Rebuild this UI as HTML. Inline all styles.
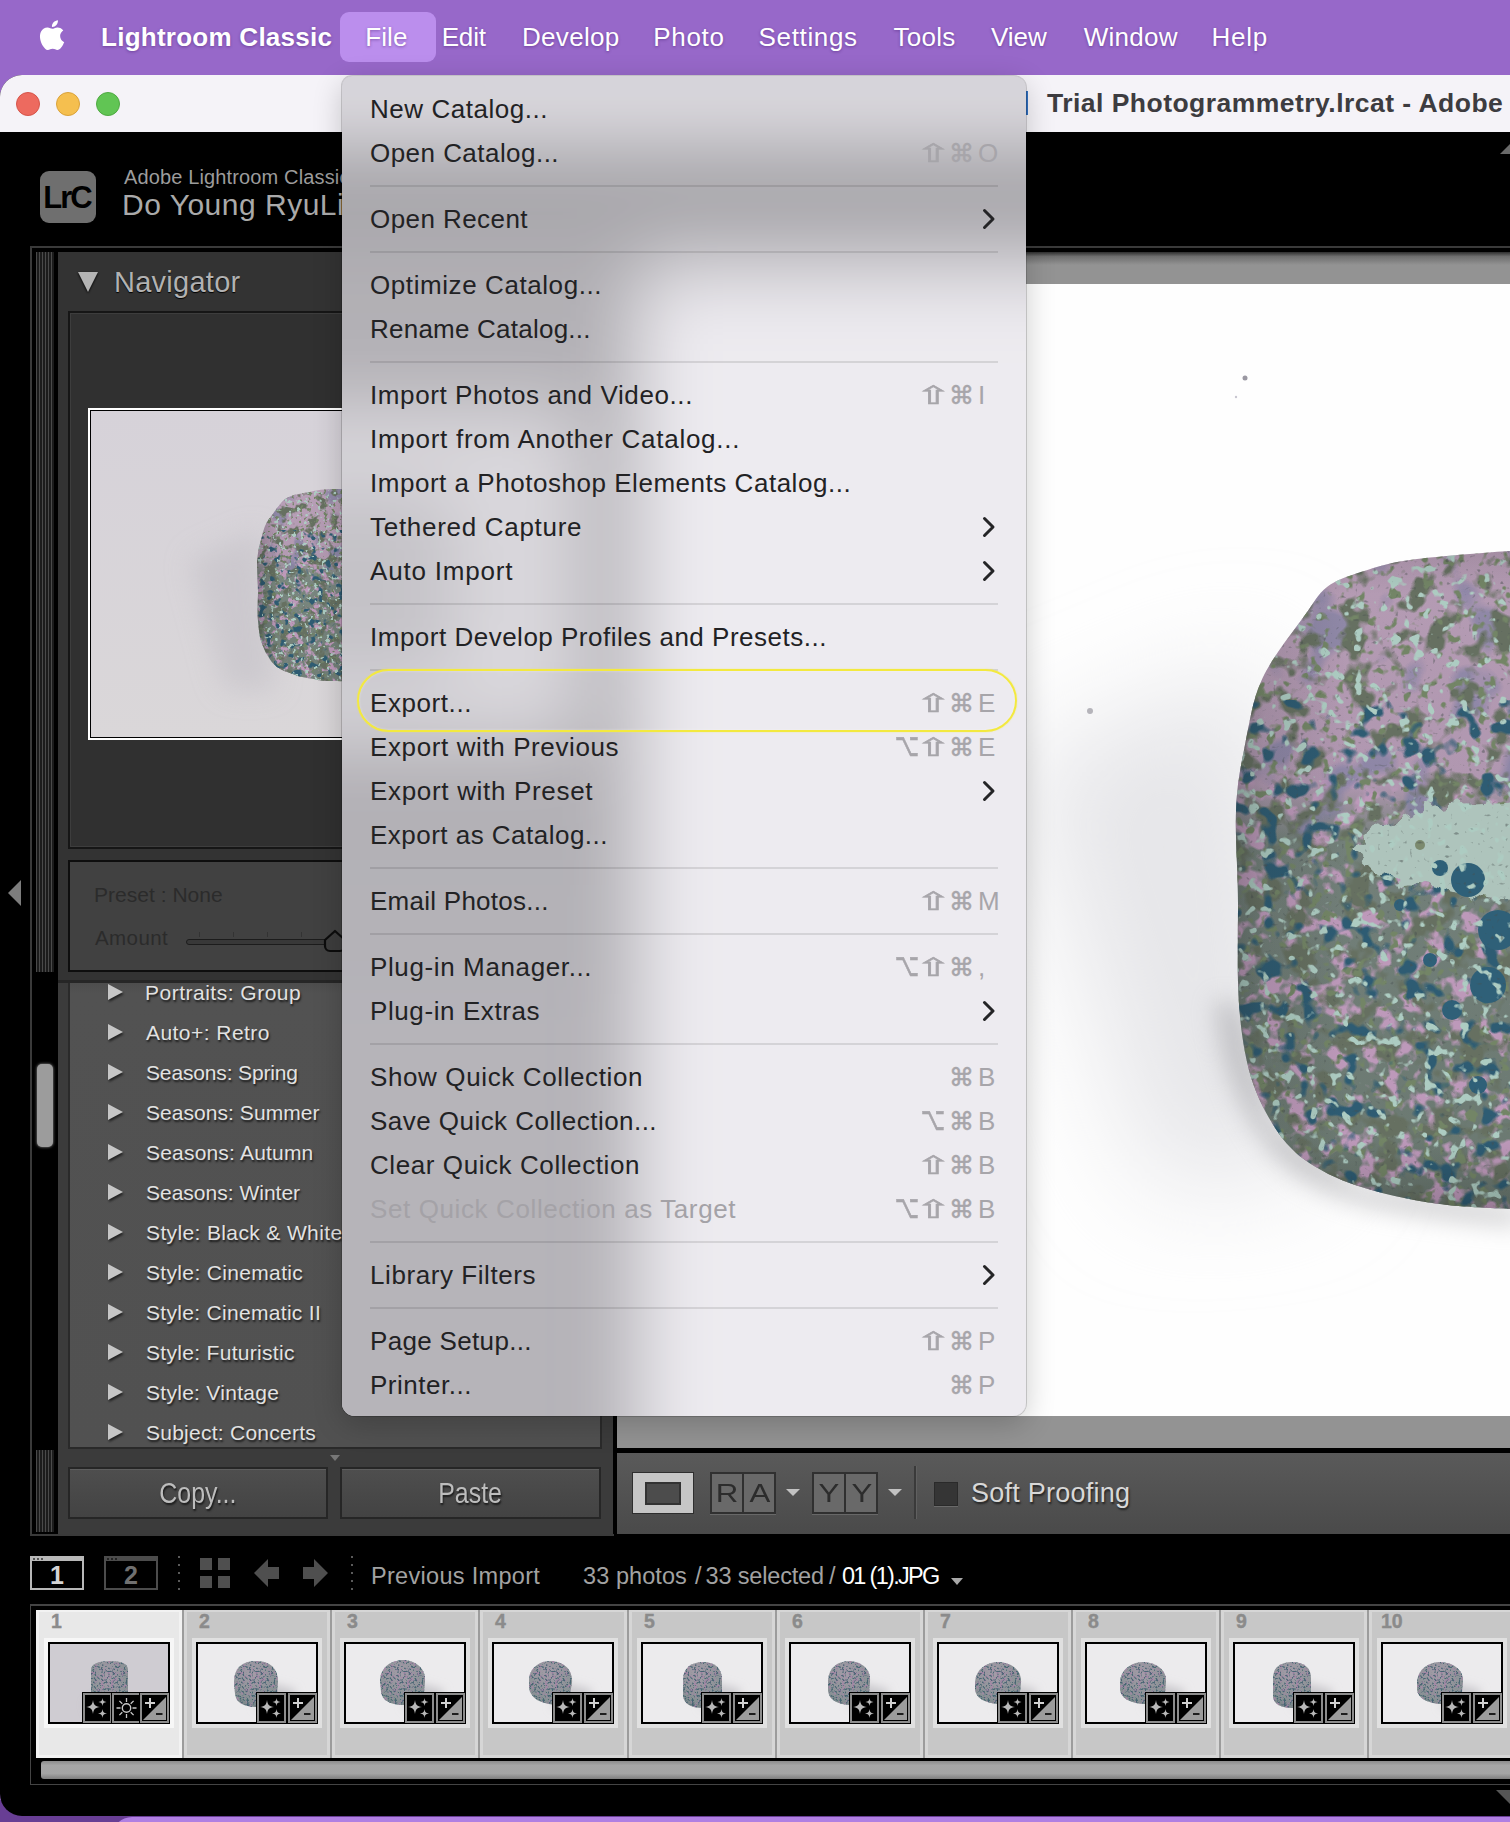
<!DOCTYPE html>
<html lang="en">
<head>
<meta charset="utf-8">
<title>Lightroom Classic – File menu</title>
<style>
*{box-sizing:border-box;margin:0;padding:0}
html,body{width:1510px;height:1822px;overflow:hidden}
body{position:relative;background:#9768c9;font-family:"Liberation Sans","DejaVu Sans",sans-serif;color:#fff}
.abs{position:absolute}
/* ---------- mac menu bar ---------- */
#menubar{position:absolute;left:0;top:0;width:1510px;height:76px;background:#9768c9}
#menubar span{position:absolute;top:20px;height:34px;line-height:34px;font-size:26px;color:#fff;white-space:nowrap;text-shadow:0 1px 3px rgba(60,20,100,.45)}
#menubar .app{font-weight:bold}
#filehl{position:absolute;left:340px;top:12px;width:96px;height:50px;border-radius:9px;background:#bb8eed}
/* ---------- window ---------- */
#win{position:absolute;left:0;top:75px;width:1530px;height:1741px;background:#000;border-radius:22px 0 0 22px;overflow:hidden}
#titlebar{position:absolute;left:0;top:0;width:100%;height:57px;background:#f5f3f8}
.tl{position:absolute;top:17px;width:24px;height:24px;border-radius:50%}
#wtitle{position:absolute;left:1047px;top:11px;font-size:26.5px;font-weight:bold;color:#3d3c40;white-space:nowrap;line-height:34px}
/* ---------- File menu ---------- */
#menu{position:absolute;left:342px;top:76px;width:684px;height:1340px;border-radius:10px 12px 13px 13px;overflow:hidden;
 background:
  linear-gradient(180deg,#d2d0d6 0,#cbc9cf 40px,rgba(178,176,181,1) 90px,rgba(170,168,173,1) 160px,rgba(172,170,175,.85) 190px,rgba(176,174,179,0) 300px),
  linear-gradient(90deg,#b3b1b6 0,#b6b4b9 200px,#c6c4c9 270px,#e2e0e5 340px,#eceaef 420px,#edebf0 100%);
 box-shadow:0 0 0 1px rgba(0,0,0,.16),0 8px 30px rgba(0,0,0,.2)}
.mi{position:absolute;left:0;width:684px;height:44px;line-height:44px;font-size:26px;color:#222224;white-space:nowrap}
.mi.dis{color:#a4a2a7}
.mt{position:absolute;left:28px;top:0}
.msep{position:absolute;left:28px;width:628px;height:2px;background:rgba(0,0,0,.1)}
.chev{position:absolute;left:640px;top:11px}
.sg{position:absolute;top:1px;font-family:"DejaVu Sans","Liberation Sans",sans-serif;font-size:25px;color:#a7a5aa;-webkit-text-stroke:.5px #a7a5aa}
.sS{transform:scaleX(1.75);transform-origin:0 50%}
.sO{transform:scale(.84,1.28);transform-origin:0 68%}
.sk{position:absolute;top:0;font-size:26px;color:#a7a5aa}
#ring{position:absolute;left:15px;top:593px;width:660px;height:63px;border:2.5px solid #f3e93f;border-radius:32px;box-shadow:inset 0 0 3px rgba(255,255,255,.35),0 0 1.5px rgba(243,233,63,.7)}
/* ---------- Lightroom chrome ---------- */
.lr{font-family:"Liberation Sans","DejaVu Sans",sans-serif}
</style>
</head>
<body>
<!-- desktop strip at very bottom -->
<div class="abs" style="left:0;top:1800px;width:1510px;height:22px;background:#683e94"></div>
<div class="abs" style="left:112px;top:1817px;width:1500px;height:40px;border-radius:22px;background:#b07fe2"></div>

<!-- macOS menu bar -->
<div id="menubar">
  <div id="filehl"></div>
  <svg class="abs" style="left:35.5px;top:18px" width="30" height="34" viewBox="0 0 28 32"><path fill="#fff" d="M22.6 17c0-3.500 2.900-5.200 3-5.300-1.700-2.400-4.200-2.700-5.100-2.800-2.200-.2-4.200 1.300-5.300 1.300-1.100 0-2.800-1.300-4.600-1.200-2.400 0-4.500 1.400-5.800 3.500-2.500 4.300-.6 10.600 1.800 14.100 1.200 1.700 2.600 3.600 4.400 3.500 1.800-.1 2.400-1.100 4.600-1.100 2.100 0 2.700 1.100 4.600 1.100 1.900 0 3.100-1.700 4.300-3.400 1.300-2 1.900-3.900 1.900-4-.1 0-3.700-1.400-3.800-5.700zM19.100 6.500c1-1.200 1.600-2.800 1.400-4.500-1.400.1-3.100.9-4.100 2.100-.9 1-1.700 2.700-1.500 4.300 1.600.1 3.200-.8 4.200-1.900z"/></svg>
  <span class="app" style="letter-spacing:0.26px;left:101.0px">Lightroom Classic</span>
  <span style="letter-spacing:0.12px;left:365.2px">File</span>
  <span style="letter-spacing:-0.16px;left:441.7px">Edit</span>
  <span style="letter-spacing:0.34px;left:521.9px">Develop</span>
  <span style="letter-spacing:0.65px;left:653.3px">Photo</span>
  <span style="letter-spacing:0.64px;left:758.6px">Settings</span>
  <span style="letter-spacing:0.25px;left:893.6px">Tools</span>
  <span style="letter-spacing:-0.04px;left:991.0px">View</span>
  <span style="letter-spacing:0.28px;left:1083.7px">Window</span>
  <span style="letter-spacing:0.76px;left:1211.5px">Help</span>
</div>

<!-- application window -->
<div id="win">
  <div id="titlebar">
    <div class="tl" style="left:16px;background:#ed6a5f;border:1px solid #d5544a"></div>
    <div class="tl" style="left:56px;background:#f5bf4f;border:1px solid #d9a23b"></div>
    <div class="tl" style="left:96px;background:#61c554;border:1px solid #4fa942"></div>
    <div class="abs" style="left:1024px;top:16px;width:4px;height:24px;background:#2f6fc0"></div>
    <div id="wtitle" style="letter-spacing:0.47px;left:1047.0px">Trial Photogrammetry.lrcat - Adobe</div>
  </div>
  <div id="pg" class="abs" style="left:0;top:-75px;width:1530px;height:1822px">
<div class="abs" style="left:40px;top:171px;width:56px;height:52px;border-radius:9px;background:#6f6f6f;color:#000;font-weight:bold;font-size:31px;line-height:53px;text-align:center;letter-spacing:-2px;text-indent:-2px">LrC</div>
<div class="abs" style="left:124px;top:164.7px;font-size:20px;line-height:24.0px;color:#9c9c9c;white-space:nowrap;letter-spacing:0.14px;">Adobe Lightroom Classic</div>
<div class="abs" style="left:122px;top:187.1px;font-size:30px;line-height:36.0px;color:#aaaaaa;white-space:nowrap;letter-spacing:0.5px;">Do Young RyuLi</div>
<div class="abs" style="left:1500px;top:143px;width:0;height:0;border-left:11px solid transparent;border-bottom:11px solid #6a6a6a"></div>
<div class="abs" style="left:30px;top:246px;width:1500px;height:2px;background:#3a3a3a"></div>
<div class="abs" style="left:30px;top:246px;width:2px;height:1290px;background:#3a3a3a"></div>
<div class="abs" style="left:30px;top:1534px;width:584px;height:2px;background:#3a3a3a"></div>
<div class="abs" style="left:36px;top:252px;width:18px;height:720px;background:repeating-linear-gradient(90deg,#4a4a4a 0 1px,#1c1c1c 1px 3px)"></div>
<div class="abs" style="left:36px;top:1450px;width:18px;height:82px;background:repeating-linear-gradient(90deg,#4a4a4a 0 1px,#1c1c1c 1px 3px)"></div>
<div class="abs" style="left:37px;top:1064px;width:16px;height:83px;border-radius:5px;background:#9c9c9c;box-shadow:0 0 3px #9c9c9c"></div>
<div class="abs" style="left:8px;top:880px;width:0;height:0;border-top:13px solid transparent;border-bottom:13px solid transparent;border-right:13px solid #7d7d7d"></div>
<div class="abs" style="left:58px;top:252px;width:555px;height:730px;background:#333333"></div>
<div class="abs" style="left:78px;top:272px;width:0;height:0;border-left:10px solid transparent;border-right:10px solid transparent;border-top:20px solid #b4b4b4;filter:drop-shadow(0 1px 1px #000)"></div>
<div class="abs" style="left:114px;top:264.9px;font-size:29px;line-height:34.8px;color:#b2b2b2;white-space:nowrap;letter-spacing:0.26px;text-shadow:0 1px 1px #000">Navigator</div>
<div class="abs" style="left:68px;top:311px;width:534px;height:538px;background:#303030;border:2px solid #161616;box-shadow:inset 0 0 0 1px #3d3d3d"></div>
<div class="abs" style="left:88px;top:408px;width:300px;height:332px;background:#000;border:2px solid #fff;overflow:hidden">
<svg class="abs" style="left:1px;top:1px" width="300" height="326" viewBox="91 411 300 326">
<defs>
<filter id="na" x="0" y="0" width="100%" height="100%" color-interpolation-filters="sRGB"><feTurbulence type="fractalNoise" baseFrequency="0.0972" numOctaves="3" seed="7"/><feColorMatrix type="matrix" values="0 0 0 0 0.4 0 0 0 0 0.44 0 0 0 0 0.38 8 0 0 0 -4.24"/></filter>
<filter id="nf" x="0" y="0" width="100%" height="100%" color-interpolation-filters="sRGB"><feTurbulence type="fractalNoise" baseFrequency="0.2500" numOctaves="2" seed="17"/><feColorMatrix type="matrix" values="0 0 0 0 0.45 0 0 0 0 0.52 0 0 0 0 0.4 0 0 9 0 -5.35"/></filter>
<filter id="nb" x="0" y="0" width="100%" height="100%" color-interpolation-filters="sRGB"><feTurbulence type="fractalNoise" baseFrequency="0.1389" numOctaves="2" seed="11"/><feColorMatrix type="matrix" values="0 0 0 0 0.18 0 0 0 0 0.36 0 0 0 0 0.45 0 9 0 0 -5.3"/></filter>
<filter id="nc" x="0" y="0" width="100%" height="100%" color-interpolation-filters="sRGB"><feTurbulence type="fractalNoise" baseFrequency="0.2361" numOctaves="2" seed="23"/><feColorMatrix type="matrix" values="0 0 0 0 0.68 0 0 0 0 0.8 0 0 0 0 0.76 0 0 12 0 -7.5"/></filter>
<filter id="nd" x="0" y="0" width="100%" height="100%" color-interpolation-filters="sRGB"><feTurbulence type="fractalNoise" baseFrequency="0.1250" numOctaves="3" seed="31"/><feColorMatrix type="matrix" values="0 0 0 0 0.74 0 0 0 0 0.6 0 0 0 0 0.73 0 8 0 0 -4.1"/></filter>
<filter id="ne" x="0" y="0" width="100%" height="100%" color-interpolation-filters="sRGB"><feTurbulence type="fractalNoise" baseFrequency="0.6111" numOctaves="1" seed="5"/><feColorMatrix type="matrix" values="0 0 0 0 0.28 0 0 0 0 0.31 0 0 0 0 0.31 9 0 0 0 -6.0"/></filter>
<filter id="ng" x="0" y="0" width="100%" height="100%" color-interpolation-filters="sRGB"><feTurbulence type="fractalNoise" baseFrequency="0.0556" numOctaves="2" seed="41"/><feColorMatrix type="matrix" values="0 0 0 0 0.5 0 0 0 0 0.5 0 0 0 0 0.64 0 7 0 0 -3.95"/></filter>
<clipPath id="nclip"><path d="M393 492C383 491 351 489 337 489C323 489 317 490 310 492C303 493 298 494 294 495C289 497 286 498 284 500C281 502 280 505 277 508C275 511 272 515 269 519C267 522 265 525 264 529C262 534 261 541 259 547C258 553 257 558 257 565C257 573 258 583 258 592C258 602 257 613 258 621C259 629 259 635 261 641C263 646 265 652 268 656C270 660 273 664 277 667C281 670 287 672 293 674C299 677 307 678 314 679C322 681 324 681 337 681C350 682 383 683 393 683Z"/></clipPath>
<linearGradient id="nbase" x1="0" y1="0" x2="0" y2="1"><stop offset="0" stop-color="#b9a0b8"/><stop offset=".36" stop-color="#b39ab2"/><stop offset=".44" stop-color="#7a8780"/><stop offset="1" stop-color="#707e77"/></linearGradient>
<filter id="nblur" x="-40%" y="-40%" width="180%" height="180%"><feGaussianBlur stdDeviation="14"/></filter>
<linearGradient id="nbg" x1="0" y1="0" x2="0" y2="1"><stop offset="0" stop-color="#d6d2d9"/><stop offset="1" stop-color="#dad7d9"/></linearGradient>
<linearGradient id="nshade" x1="0" y1="0" x2="1" y2="0"><stop offset="0" stop-color="#1c2020" stop-opacity=".3"/><stop offset=".2" stop-color="#000" stop-opacity="0"/></linearGradient>
</defs>
<rect x="90" y="410" width="300" height="330" fill="url(#nbg)"/>
<path d="M190 560L260 530L275 690L225 690Z" fill="#c6c3c9" filter="url(#nblur)" opacity=".7"/>
<g clip-path="url(#nclip)">
<rect x="250" y="480" width="145" height="215" fill="url(#nbase)"/>
<rect x="250" y="560" width="145" height="135" filter="url(#nd)"/>
<rect x="250" y="480" width="145" height="90" filter="url(#ng)" opacity=".7"/>
<rect x="250" y="480" width="145" height="215" filter="url(#na)"/>
<rect x="250" y="480" width="145" height="215" filter="url(#nf)"/>
<rect x="250" y="530" width="145" height="165" filter="url(#nb)"/>
<rect x="250" y="480" width="145" height="215" filter="url(#nc)"/>
<rect x="250" y="480" width="145" height="215" fill="url(#nshade)"/>
</g>
</svg></div>
<div class="abs" style="left:68px;top:860px;width:534px;height:112px;background:#414141;border:2px solid #0e0e0e"></div>
<div class="abs" style="left:94px;top:882.1px;font-size:21px;line-height:25.2px;color:#2b2b2b;white-space:nowrap;letter-spacing:0.02px;">Preset : None</div>
<div class="abs" style="left:95px;top:926.0px;font-size:20.5px;line-height:24.6px;color:#2b2b2b;white-space:nowrap;letter-spacing:0.41px;">Amount</div>
<div class="abs" style="left:186px;top:939px;width:160px;height:6px;border-radius:3px;background:#383838;border:1px solid #1c1c1c"></div>
<div class="abs" style="left:199px;top:932px;width:1px;height:5px;background:#333"></div>
<div class="abs" style="left:233px;top:932px;width:1px;height:5px;background:#333"></div>
<div class="abs" style="left:267px;top:932px;width:1px;height:5px;background:#333"></div>
<div class="abs" style="left:301px;top:932px;width:1px;height:5px;background:#333"></div>
<svg class="abs" style="left:323px;top:929px" width="26" height="26" viewBox="0 0 26 26"><path d="M12 2 22 11V17a5 5 0 0 1-5 5H7a5 5 0 0 1-5-5V11Z" fill="#3d3d3d" stroke="#0c0c0c" stroke-width="2.200" stroke-linejoin="round"/></svg>
<div class="abs" style="left:58px;top:980px;width:555px;height:3px;background:#262626"></div>
<div class="abs" style="left:58px;top:983px;width:555px;height:551px;background:#3b3b3b"></div>
<div class="abs" style="left:68px;top:983px;width:534px;height:466px;background:linear-gradient(#4d4d4d,#525252 10px,#515151);border:2px solid #2a2a2a;border-top:none"></div>
<div class="abs" style="left:70px;top:983px;width:530px;height:464px;overflow:hidden">
<div class="abs" style="left:38px;top:1px;width:0;height:0;border-top:8px solid transparent;border-bottom:8px solid transparent;border-left:15px solid #c6c6c6;filter:drop-shadow(1px 2px 1px #222)"></div>
<div class="abs" style="left:75px;top:-2.9px;font-size:21px;line-height:25.2px;color:#e2e2e2;white-space:nowrap;letter-spacing:0.5px;text-shadow:1px 2px 2px #1a1a1a">Portraits: Group</div>
<div class="abs" style="left:38px;top:41px;width:0;height:0;border-top:8px solid transparent;border-bottom:8px solid transparent;border-left:15px solid #c6c6c6;filter:drop-shadow(1px 2px 1px #222)"></div>
<div class="abs" style="left:76px;top:37.1px;font-size:21px;line-height:25.2px;color:#e2e2e2;white-space:nowrap;letter-spacing:0.45px;text-shadow:1px 2px 2px #1a1a1a">Auto+: Retro</div>
<div class="abs" style="left:38px;top:81px;width:0;height:0;border-top:8px solid transparent;border-bottom:8px solid transparent;border-left:15px solid #c6c6c6;filter:drop-shadow(1px 2px 1px #222)"></div>
<div class="abs" style="left:76px;top:77.1px;font-size:21px;line-height:25.2px;color:#e2e2e2;white-space:nowrap;letter-spacing:-0.15px;text-shadow:1px 2px 2px #1a1a1a">Seasons: Spring</div>
<div class="abs" style="left:38px;top:121px;width:0;height:0;border-top:8px solid transparent;border-bottom:8px solid transparent;border-left:15px solid #c6c6c6;filter:drop-shadow(1px 2px 1px #222)"></div>
<div class="abs" style="left:76px;top:117.1px;font-size:21px;line-height:25.2px;color:#e2e2e2;white-space:nowrap;letter-spacing:0.05px;text-shadow:1px 2px 2px #1a1a1a">Seasons: Summer</div>
<div class="abs" style="left:38px;top:161px;width:0;height:0;border-top:8px solid transparent;border-bottom:8px solid transparent;border-left:15px solid #c6c6c6;filter:drop-shadow(1px 2px 1px #222)"></div>
<div class="abs" style="left:76px;top:157.1px;font-size:21px;line-height:25.2px;color:#e2e2e2;white-space:nowrap;letter-spacing:0.19px;text-shadow:1px 2px 2px #1a1a1a">Seasons: Autumn</div>
<div class="abs" style="left:38px;top:201px;width:0;height:0;border-top:8px solid transparent;border-bottom:8px solid transparent;border-left:15px solid #c6c6c6;filter:drop-shadow(1px 2px 1px #222)"></div>
<div class="abs" style="left:76px;top:197.1px;font-size:21px;line-height:25.2px;color:#e2e2e2;white-space:nowrap;letter-spacing:0.0px;text-shadow:1px 2px 2px #1a1a1a">Seasons: Winter</div>
<div class="abs" style="left:38px;top:241px;width:0;height:0;border-top:8px solid transparent;border-bottom:8px solid transparent;border-left:15px solid #c6c6c6;filter:drop-shadow(1px 2px 1px #222)"></div>
<div class="abs" style="left:76px;top:237.1px;font-size:21px;line-height:25.2px;color:#e2e2e2;white-space:nowrap;letter-spacing:0.37px;text-shadow:1px 2px 2px #1a1a1a">Style: Black &amp; White</div>
<div class="abs" style="left:38px;top:281px;width:0;height:0;border-top:8px solid transparent;border-bottom:8px solid transparent;border-left:15px solid #c6c6c6;filter:drop-shadow(1px 2px 1px #222)"></div>
<div class="abs" style="left:76px;top:277.1px;font-size:21px;line-height:25.2px;color:#e2e2e2;white-space:nowrap;letter-spacing:0.34px;text-shadow:1px 2px 2px #1a1a1a">Style: Cinematic</div>
<div class="abs" style="left:38px;top:321px;width:0;height:0;border-top:8px solid transparent;border-bottom:8px solid transparent;border-left:15px solid #c6c6c6;filter:drop-shadow(1px 2px 1px #222)"></div>
<div class="abs" style="left:76px;top:317.1px;font-size:21px;line-height:25.2px;color:#e2e2e2;white-space:nowrap;letter-spacing:0.31px;text-shadow:1px 2px 2px #1a1a1a">Style: Cinematic II</div>
<div class="abs" style="left:38px;top:361px;width:0;height:0;border-top:8px solid transparent;border-bottom:8px solid transparent;border-left:15px solid #c6c6c6;filter:drop-shadow(1px 2px 1px #222)"></div>
<div class="abs" style="left:76px;top:357.1px;font-size:21px;line-height:25.2px;color:#e2e2e2;white-space:nowrap;letter-spacing:0.31px;text-shadow:1px 2px 2px #1a1a1a">Style: Futuristic</div>
<div class="abs" style="left:38px;top:401px;width:0;height:0;border-top:8px solid transparent;border-bottom:8px solid transparent;border-left:15px solid #c6c6c6;filter:drop-shadow(1px 2px 1px #222)"></div>
<div class="abs" style="left:76px;top:397.1px;font-size:21px;line-height:25.2px;color:#e2e2e2;white-space:nowrap;letter-spacing:0.28px;text-shadow:1px 2px 2px #1a1a1a">Style: Vintage</div>
<div class="abs" style="left:38px;top:441px;width:0;height:0;border-top:8px solid transparent;border-bottom:8px solid transparent;border-left:15px solid #c6c6c6;filter:drop-shadow(1px 2px 1px #222)"></div>
<div class="abs" style="left:76px;top:437.1px;font-size:21px;line-height:25.2px;color:#e2e2e2;white-space:nowrap;letter-spacing:0.25px;text-shadow:1px 2px 2px #1a1a1a">Subject: Concerts</div>
</div>
<div class="abs" style="left:330px;top:1455px;width:0;height:0;border-left:5px solid transparent;border-right:5px solid transparent;border-top:6px solid #777"></div>
<div class="abs btn" style="left:68px;top:1467px;width:260px;height:52px;background:linear-gradient(#4e4e4e,#434343);border:2px solid #262626;box-shadow:inset 0 1px 0 #5e5e5e;font-size:29px;line-height:48px;text-align:center;color:#bdbdbd;text-shadow:1px 2px 2px #1a1a1a"><span style="display:inline-block;transform:scaleX(.86)">Copy...</span></div>
<div class="abs btn" style="left:340px;top:1467px;width:261px;height:52px;background:linear-gradient(#4e4e4e,#434343);border:2px solid #262626;box-shadow:inset 0 1px 0 #5e5e5e;font-size:29px;line-height:48px;text-align:center;color:#bdbdbd;text-shadow:1px 2px 2px #1a1a1a"><span style="display:inline-block;transform:scaleX(.86)">Paste</span></div>
<div class="abs" style="left:617px;top:252px;width:920px;height:1196px;background:#939393"></div>
<div class="abs" style="left:617px;top:252px;width:920px;height:13px;background:linear-gradient(#2e2e2e,#6f6f6f 35%,#939393)"></div>
<svg class="abs" style="left:617px;top:284px" width="893" height="1132" viewBox="617 284 893 1132">
<defs>
<filter id="ma" x="0" y="0" width="100%" height="100%" color-interpolation-filters="sRGB"><feTurbulence type="fractalNoise" baseFrequency="0.0350" numOctaves="3" seed="7"/><feColorMatrix type="matrix" values="0 0 0 0 0.4 0 0 0 0 0.44 0 0 0 0 0.38 8 0 0 0 -4.24"/></filter>
<filter id="mf" x="0" y="0" width="100%" height="100%" color-interpolation-filters="sRGB"><feTurbulence type="fractalNoise" baseFrequency="0.0900" numOctaves="2" seed="17"/><feColorMatrix type="matrix" values="0 0 0 0 0.45 0 0 0 0 0.52 0 0 0 0 0.4 0 0 9 0 -5.35"/></filter>
<filter id="mb" x="0" y="0" width="100%" height="100%" color-interpolation-filters="sRGB"><feTurbulence type="fractalNoise" baseFrequency="0.0500" numOctaves="2" seed="11"/><feColorMatrix type="matrix" values="0 0 0 0 0.18 0 0 0 0 0.36 0 0 0 0 0.45 0 9 0 0 -5.3"/></filter>
<filter id="mc" x="0" y="0" width="100%" height="100%" color-interpolation-filters="sRGB"><feTurbulence type="fractalNoise" baseFrequency="0.0850" numOctaves="2" seed="23"/><feColorMatrix type="matrix" values="0 0 0 0 0.68 0 0 0 0 0.8 0 0 0 0 0.76 0 0 12 0 -7.5"/></filter>
<filter id="md" x="0" y="0" width="100%" height="100%" color-interpolation-filters="sRGB"><feTurbulence type="fractalNoise" baseFrequency="0.0450" numOctaves="3" seed="31"/><feColorMatrix type="matrix" values="0 0 0 0 0.74 0 0 0 0 0.6 0 0 0 0 0.73 0 8 0 0 -4.1"/></filter>
<filter id="me" x="0" y="0" width="100%" height="100%" color-interpolation-filters="sRGB"><feTurbulence type="fractalNoise" baseFrequency="0.2200" numOctaves="1" seed="5"/><feColorMatrix type="matrix" values="0 0 0 0 0.28 0 0 0 0 0.31 0 0 0 0 0.31 9 0 0 0 -6.0"/></filter>
<filter id="mg" x="0" y="0" width="100%" height="100%" color-interpolation-filters="sRGB"><feTurbulence type="fractalNoise" baseFrequency="0.0200" numOctaves="2" seed="41"/><feColorMatrix type="matrix" values="0 0 0 0 0.5 0 0 0 0 0.5 0 0 0 0 0.64 0 7 0 0 -3.95"/></filter>
<clipPath id="mclip"><path d="M1520 550C1518 550 1527 550 1510 551C1493 552 1442 556 1417 559C1392 562 1376 567 1361 572C1346 577 1336 580 1327 587C1318 594 1313 604 1305 615C1297 626 1286 640 1278 652C1270 664 1264 673 1258 689C1252 705 1248 730 1244 750C1240 770 1237 785 1236 811C1235 837 1238 872 1238 904C1238 936 1237 976 1239 1004C1241 1032 1244 1050 1249 1070C1254 1090 1263 1108 1272 1123C1281 1138 1291 1150 1305 1160C1319 1170 1337 1179 1358 1186C1379 1193 1407 1199 1432 1203C1457 1207 1495 1208 1510 1209C1525 1210 1518 1210 1520 1210Z"/></clipPath>
<linearGradient id="mbase" x1="0" y1="0" x2="0" y2="1"><stop offset="0" stop-color="#b59cb4"/><stop offset=".36" stop-color="#b097b0"/><stop offset=".44" stop-color="#73807a"/><stop offset="1" stop-color="#6a7870"/></linearGradient>
<linearGradient id="mshade" x1="0" y1="0" x2="1" y2="0"><stop offset="0" stop-color="#1c2020" stop-opacity=".30"/><stop offset=".12" stop-color="#1c2020" stop-opacity=".12"/><stop offset=".4" stop-color="#000" stop-opacity="0"/></linearGradient>
<linearGradient id="mshade2" x1="0" y1="0" x2="0" y2="1"><stop offset="0" stop-color="#000" stop-opacity=".12"/><stop offset=".08" stop-color="#000" stop-opacity="0"/><stop offset=".88" stop-color="#000" stop-opacity="0"/><stop offset="1" stop-color="#000" stop-opacity=".22"/></linearGradient>
<filter id="mrag" x="-10%" y="-20%" width="120%" height="140%"><feTurbulence type="fractalNoise" baseFrequency="0.06" numOctaves="2" seed="2"/><feDisplacementMap in="SourceGraphic" scale="28" xChannelSelector="R" yChannelSelector="G"/></filter>
<filter id="mblur" filterUnits="userSpaceOnUse" x="617" y="284" width="893" height="1132"><feGaussianBlur stdDeviation="55"/></filter>
<filter id="mblur2" filterUnits="userSpaceOnUse" x="1100" y="800" width="420" height="520"><feGaussianBlur stdDeviation="12"/></filter>
</defs>
<rect x="617" y="284" width="893" height="1132" fill="#fefefe"/>
<path d="M1020 760L1260 660L1320 1170L1150 1190Z" fill="#e6e6e9" filter="url(#mblur)"/>
<path d="M1520 1225C1505 1224 1460 1220 1432 1216C1404 1212 1374 1208 1350 1200C1326 1192 1307 1183 1290 1170C1273 1157 1261 1138 1250 1120C1239 1102 1231 1080 1225 1060C1219 1040 1217 1010 1215 1000L1239 1004L1272 1123L1358 1186L1520 1209Z" fill="#9a9a9e" filter="url(#mblur2)" opacity=".5"/>
<g clip-path="url(#mclip)">
<rect x="1230" y="540" width="290" height="680" fill="url(#mbase)"/>
<rect x="1230" y="780" width="290" height="440" filter="url(#md)"/>
<rect x="1230" y="540" width="290" height="300" filter="url(#mg)" opacity=".7"/>
<rect x="1230" y="540" width="290" height="680" filter="url(#ma)"/>
<rect x="1230" y="540" width="290" height="680" filter="url(#mf)"/>
<rect x="1230" y="700" width="290" height="520" filter="url(#mb)"/>
<path d="M1352 846C1372 822 1400 826 1418 812C1450 800 1480 806 1520 800L1520 900C1480 905 1440 880 1400 884C1380 876 1362 866 1352 846Z" fill="#aec4bc" filter="url(#mrag)"/>
<circle cx="1468" cy="880" r="17" fill="#2f6078"/><circle cx="1498" cy="930" r="20" fill="#2f6078"/><circle cx="1440" cy="868" r="8" fill="#2f6078"/><circle cx="1420" cy="845" r="5" fill="#7c8a6e"/><circle cx="1488" cy="985" r="18" fill="#2f6078"/><circle cx="1452" cy="1010" r="10" fill="#2f6078"/><circle cx="1478" cy="1085" r="9" fill="#2f6078"/><circle cx="1430" cy="960" r="7" fill="#2f6078"/><circle cx="1400" cy="905" r="6" fill="#2f6078"/>
<rect x="1230" y="540" width="290" height="680" filter="url(#mc)"/>
<rect x="1230" y="540" width="290" height="680" filter="url(#me)" opacity=".45"/>
<rect x="1230" y="540" width="290" height="680" fill="url(#mshade)"/>
<rect x="1230" y="540" width="290" height="680" fill="url(#mshade2)"/>
</g>
<circle cx="1245" cy="378" r="2.500" fill="#9a98a2"/><circle cx="1236" cy="397" r="1.200" fill="#c8c6d0"/><circle cx="1090" cy="711" r="3" fill="#b5b4ba"/>
</svg>
<div class="abs" style="left:617px;top:1453px;width:920px;height:81px;background:linear-gradient(#5a5a5a,#4a4a4a)"></div>
<div class="abs" style="left:632px;top:1472px;width:62px;height:42px;background:#c6c6c6;border:1px solid #2e2e2e"></div>
<div class="abs" style="left:645px;top:1482px;width:36px;height:23px;background:#4c4c4c;border:2px solid #333"></div>
<div class="abs" style="left:710px;top:1472px;width:66px;height:42px;background:#696969;border:2px solid #303030;box-shadow:0 1px 0 #686868"></div>
<div class="abs" style="left:742px;top:1472px;width:2px;height:42px;background:#303030"></div>
<div class="abs" style="left:711px;top:1472px;width:32px;height:42px;font-size:26px;line-height:42px;text-align:center;color:#2c2c2c;transform:scaleX(1.2)">R</div>
<div class="abs" style="left:744px;top:1472px;width:32px;height:42px;font-size:26px;line-height:42px;text-align:center;color:#2c2c2c;transform:scaleX(1.2)">A</div>
<div class="abs" style="left:786px;top:1489px;width:0;height:0;border-left:7px solid transparent;border-right:7px solid transparent;border-top:7px solid #c2c2c2"></div>
<div class="abs" style="left:812px;top:1472px;width:66px;height:42px;background:#696969;border:2px solid #303030;box-shadow:0 1px 0 #686868"></div>
<div class="abs" style="left:844px;top:1472px;width:2px;height:42px;background:#303030"></div>
<div class="abs" style="left:813px;top:1472px;width:32px;height:42px;font-size:26px;line-height:42px;text-align:center;color:#2c2c2c;transform:scaleX(1.2)">Y</div>
<div class="abs" style="left:846px;top:1472px;width:32px;height:42px;font-size:26px;line-height:42px;text-align:center;color:#2c2c2c;transform:scaleX(1.2)">Y</div>
<div class="abs" style="left:888px;top:1489px;width:0;height:0;border-left:7px solid transparent;border-right:7px solid transparent;border-top:7px solid #c2c2c2"></div>
<div class="abs" style="left:914px;top:1466px;width:2px;height:53px;background:#3a3a3a;box-shadow:1px 0 0 #606060"></div>
<div class="abs" style="left:934px;top:1482px;width:24px;height:24px;background:#353535;border:1px solid #2a2a2a;box-shadow:0 1px 0 #6a6a6a"></div>
<div class="abs" style="left:971px;top:1476.8px;font-size:27px;line-height:32.4px;color:#d8d8d8;white-space:nowrap;letter-spacing:0.24px;text-shadow:1px 2px 2px #222">Soft Proofing</div>
<div class="abs" style="left:30px;top:1556px;width:54px;height:34px;border:2px solid #b8b8b8;border-top:5px solid #b8b8b8;color:#d4d4d4;font-weight:bold;font-size:25px;line-height:28px;text-align:center">1</div>
<div class="abs" style="left:33px;top:1558px;width:2px;height:2px;background:#000;opacity:.55"></div>
<div class="abs" style="left:37px;top:1558px;width:2px;height:2px;background:#000;opacity:.55"></div>
<div class="abs" style="left:41px;top:1558px;width:2px;height:2px;background:#000;opacity:.55"></div>
<div class="abs" style="left:104px;top:1556px;width:54px;height:34px;border:2px solid #4c4c4c;border-top:5px solid #4c4c4c;color:#707070;font-weight:bold;font-size:25px;line-height:28px;text-align:center">2</div>
<div class="abs" style="left:107px;top:1558px;width:2px;height:2px;background:#000;opacity:.55"></div>
<div class="abs" style="left:111px;top:1558px;width:2px;height:2px;background:#000;opacity:.55"></div>
<div class="abs" style="left:115px;top:1558px;width:2px;height:2px;background:#000;opacity:.55"></div>
<div class="abs" style="left:178px;top:1556px;width:2px;height:34px;background:repeating-linear-gradient(#5a5a5a 0 2px,transparent 2px 8px)"></div>
<div class="abs" style="left:351px;top:1556px;width:2px;height:34px;background:repeating-linear-gradient(#5a5a5a 0 2px,transparent 2px 8px)"></div>
<div class="abs" style="left:200px;top:1558px;width:12px;height:12px;background:#4f4f4f"></div>
<div class="abs" style="left:200px;top:1576px;width:12px;height:12px;background:#4f4f4f"></div>
<div class="abs" style="left:218px;top:1558px;width:12px;height:12px;background:#4f4f4f"></div>
<div class="abs" style="left:218px;top:1576px;width:12px;height:12px;background:#4f4f4f"></div>
<svg class="abs" style="left:252px;top:1558px" width="78" height="30" viewBox="0 0 78 30"><path fill="#4f4f4f" d="M2 15 16 1v8h11v12H16v8zM76 15 62 1v8H51v12h11v8z"/></svg>
<div class="abs" style="left:371px;top:1561.8px;font-size:23.5px;line-height:28.2px;color:#a2a2a2;white-space:nowrap;letter-spacing:0.31px;">Previous Import</div>
<div class="abs" style="left:583px;top:1561.8px;font-size:23.5px;line-height:28.2px;color:#a2a2a2;white-space:nowrap;letter-spacing:0.07px;">33 photos</div>
<div class="abs" style="left:695px;top:1561.8px;font-size:23.5px;line-height:28.2px;color:#a2a2a2;white-space:nowrap;letter-spacing:0px;">/</div>
<div class="abs" style="left:705.5px;top:1561.8px;font-size:23.5px;line-height:28.2px;color:#a2a2a2;white-space:nowrap;letter-spacing:-0.16px;">33 selected</div>
<div class="abs" style="left:829px;top:1561.8px;font-size:23.5px;line-height:28.2px;color:#a2a2a2;white-space:nowrap;letter-spacing:0px;">/</div>
<div class="abs" style="left:842px;top:1561.8px;font-size:23.5px;line-height:28.2px;color:#ffffff;white-space:nowrap;letter-spacing:-1.7px;">01 (1).JPG</div>
<div class="abs" style="left:951px;top:1578px;width:0;height:0;border-left:6px solid transparent;border-right:6px solid transparent;border-top:7px solid #a8a8a8"></div>
<div class="abs" style="left:30px;top:1604px;width:1500px;height:181px;border:1px solid #444;border-top-width:2px;border-right:none"></div>
<svg class="abs" width="0" height="0" style="left:0;top:0"><defs>
<filter id="ts" x="0" y="0" width="100%" height="100%" color-interpolation-filters="sRGB"><feTurbulence type="fractalNoise" baseFrequency="0.45" numOctaves="2" seed="4"/><feColorMatrix type="matrix" values="0 0 0 0 .22 0 0 0 0 .36 0 0 0 0 .42 0 6 0 0 -3.1"/></filter>
<filter id="ts2" x="0" y="0" width="100%" height="100%" color-interpolation-filters="sRGB"><feTurbulence type="fractalNoise" baseFrequency="0.3" numOctaves="2" seed="9"/><feColorMatrix type="matrix" values="0 0 0 0 .66 0 0 0 0 .52 0 0 0 0 .66 6 0 0 0 -3.2"/></filter>
<radialGradient id="tg" cx=".45" cy=".3" r=".8"><stop offset="0" stop-color="#a49ca8"/><stop offset=".6" stop-color="#869092"/><stop offset="1" stop-color="#66737a"/></radialGradient>
<filter id="tb" x="-50%" y="-50%" width="200%" height="200%"><feGaussianBlur stdDeviation="5"/></filter>
</defs></svg>
<div class="abs" style="left:36px;top:1610px;width:146px;height:148px;background:#e8e8e8;border:3px solid #f2f2f2;border-top-width:2px"></div>
<div class="abs" style="left:51px;top:1610px;font-size:19.5px;line-height:22px;font-weight:bold;color:#8b8b8b;-webkit-text-stroke:.4px #8b8b8b">1</div>
<div class="abs" style="left:44px;top:1638px;width:130px;height:90px;background:#f7f7f7"></div>
<div class="abs" style="left:48px;top:1642px;width:122px;height:82px;background:#cfccd2;border:2px solid #000;overflow:hidden">
<svg width="118" height="78" viewBox="2 2 118 78" style="display:block"><path d="M38 62L60 50L70 70L45 76Z" fill="#a9a6ad" filter="url(#tb)"/><clipPath id="tc0"><path d="M43 28C43 22 50 19 62 19C74 19 80 22 80 28L80 80L43 80Z"/></clipPath><g clip-path="url(#tc0)"><rect x="40" y="15" width="45" height="65" fill="url(#tg)"/><rect x="40" y="15" width="45" height="65" filter="url(#ts2)" opacity=".8"/><rect x="40" y="15" width="45" height="65" filter="url(#ts)" opacity=".8"/></g></svg>
</div>
<div class="abs" style="left:82px;top:1692px;width:31px;height:32px;background:#000;border:1px solid #000;box-shadow:inset 0 0 0 2px #8c8c8c"><svg width="29" height="30" viewBox="0 0 29 30" style="display:block"><path fill="#b8b8b8" d="M10 7c.7 5 2 6.300 7 7-5 .7-6.300 2-7 7-.7-5-2-6.300-7-7 5-.7 6.300-2 7-7zM19.500 5c.4 2.800 1.200 3.600 4 4-2.800.4-3.600 1.200-4 4-.4-2.800-1.200-3.600-4-4 2.800-.4 3.600-1.200 4-4zM19.500 16c.45 3.200 1.300 4.050 4.500 4.500-3.200.45-4.050 1.300-4.500 4.500-.45-3.200-1.300-4.050-4.500-4.500 3.200-.45 4.050-1.300 4.500-4.500z"/></svg></div>
<div class="abs" style="left:111px;top:1692px;width:31px;height:32px;background:#000;border:1px solid #000;box-shadow:inset 0 0 0 2px #8c8c8c"><svg width="29" height="30" viewBox="0 0 29 30" style="display:block"><circle cx="14.500" cy="15" r="4.200" fill="none" stroke="#c8c8c8" stroke-width="1.400"/><path stroke="#c8c8c8" stroke-width="1.300" d="M14.500 5v4M14.500 21v4M4.500 15h4M20.500 15h4M7.400 7.900l2.900 2.900M18.700 19.200l2.900 2.900M7.400 22.100l2.900-2.900M18.700 10.800l2.900-2.900"/></svg></div>
<div class="abs" style="left:139px;top:1692px;width:31px;height:32px;background:#000;border:1px solid #000;box-shadow:inset 0 0 0 2px #8c8c8c"><svg width="29" height="30" viewBox="0 0 29 30" style="display:block"><path fill="#9c9c9c" d="M26 4v23H3z"/><path stroke="#d0d0d0" stroke-width="2" d="M5 10h10M10 5v10"/><path stroke="#1d1d1d" stroke-width="2" d="M16 21h6.500"/></svg></div>
<div class="abs" style="left:182px;top:1610px;width:2px;height:148px;background:#9c9c9c"></div>
<div class="abs" style="left:184px;top:1610px;width:146px;height:148px;background:#c7c7c7;border:3px solid #d6d6d6;border-top-width:2px"></div>
<div class="abs" style="left:199px;top:1610px;font-size:19.5px;line-height:22px;font-weight:bold;color:#8b8b8b;-webkit-text-stroke:.4px #8b8b8b">2</div>
<div class="abs" style="left:192px;top:1638px;width:130px;height:90px;background:#e0e0e0"></div>
<div class="abs" style="left:196px;top:1642px;width:122px;height:82px;background:#ecebed;border:2px solid #000;overflow:hidden">
<svg width="118" height="78" viewBox="2 2 118 78" style="display:block"><path d="M70 40L100 48L95 66L60 66Z" fill="#c9c8cc" filter="url(#tb)"/><clipPath id="tc1"><path d="M38 40C38 26 46 19 60 19C74 19 82 26 82 40L81 52C80 61 72 65 60 65C47 65 40 60 39 52Z"/></clipPath><g clip-path="url(#tc1)"><rect x="30" y="15" width="60" height="55" fill="url(#tg)"/><rect x="30" y="15" width="60" height="55" filter="url(#ts2)" opacity=".8"/><rect x="30" y="15" width="60" height="55" filter="url(#ts)" opacity=".8"/></g></svg>
</div>
<div class="abs" style="left:256px;top:1692px;width:31px;height:32px;background:#000;border:1px solid #000;box-shadow:inset 0 0 0 2px #8c8c8c"><svg width="29" height="30" viewBox="0 0 29 30" style="display:block"><path fill="#b8b8b8" d="M10 7c.7 5 2 6.300 7 7-5 .7-6.300 2-7 7-.7-5-2-6.300-7-7 5-.7 6.300-2 7-7zM19.500 5c.4 2.800 1.200 3.600 4 4-2.800.4-3.600 1.200-4 4-.4-2.800-1.200-3.600-4-4 2.800-.4 3.600-1.200 4-4zM19.500 16c.45 3.200 1.300 4.050 4.500 4.500-3.200.45-4.050 1.300-4.500 4.500-.45-3.200-1.300-4.050-4.500-4.500 3.200-.45 4.050-1.300 4.500-4.500z"/></svg></div>
<div class="abs" style="left:287px;top:1692px;width:31px;height:32px;background:#000;border:1px solid #000;box-shadow:inset 0 0 0 2px #8c8c8c"><svg width="29" height="30" viewBox="0 0 29 30" style="display:block"><path fill="#9c9c9c" d="M26 4v23H3z"/><path stroke="#d0d0d0" stroke-width="2" d="M5 10h10M10 5v10"/><path stroke="#1d1d1d" stroke-width="2" d="M16 21h6.500"/></svg></div>
<div class="abs" style="left:330px;top:1610px;width:2px;height:148px;background:#9c9c9c"></div>
<div class="abs" style="left:332px;top:1610px;width:146px;height:148px;background:#c7c7c7;border:3px solid #d6d6d6;border-top-width:2px"></div>
<div class="abs" style="left:347px;top:1610px;font-size:19.5px;line-height:22px;font-weight:bold;color:#8b8b8b;-webkit-text-stroke:.4px #8b8b8b">3</div>
<div class="abs" style="left:340px;top:1638px;width:130px;height:90px;background:#e0e0e0"></div>
<div class="abs" style="left:344px;top:1642px;width:122px;height:82px;background:#ecebed;border:2px solid #000;overflow:hidden">
<svg width="118" height="78" viewBox="2 2 118 78" style="display:block"><path d="M70 40L100 48L95 66L60 66Z" fill="#c9c8cc" filter="url(#tb)"/><clipPath id="tc2"><path d="M36 38C37 24 48 18 60 18C73 19 82 27 81 40L80 50C78 60 70 63 59 63C46 63 38 58 37 50Z"/></clipPath><g clip-path="url(#tc2)"><rect x="30" y="15" width="60" height="55" fill="url(#tg)"/><rect x="30" y="15" width="60" height="55" filter="url(#ts2)" opacity=".8"/><rect x="30" y="15" width="60" height="55" filter="url(#ts)" opacity=".8"/></g></svg>
</div>
<div class="abs" style="left:404px;top:1692px;width:31px;height:32px;background:#000;border:1px solid #000;box-shadow:inset 0 0 0 2px #8c8c8c"><svg width="29" height="30" viewBox="0 0 29 30" style="display:block"><path fill="#b8b8b8" d="M10 7c.7 5 2 6.300 7 7-5 .7-6.300 2-7 7-.7-5-2-6.300-7-7 5-.7 6.300-2 7-7zM19.500 5c.4 2.800 1.200 3.600 4 4-2.800.4-3.600 1.200-4 4-.4-2.800-1.200-3.600-4-4 2.800-.4 3.600-1.200 4-4zM19.500 16c.45 3.200 1.300 4.050 4.500 4.500-3.200.45-4.050 1.300-4.500 4.500-.45-3.200-1.300-4.050-4.500-4.500 3.200-.45 4.050-1.300 4.500-4.500z"/></svg></div>
<div class="abs" style="left:435px;top:1692px;width:31px;height:32px;background:#000;border:1px solid #000;box-shadow:inset 0 0 0 2px #8c8c8c"><svg width="29" height="30" viewBox="0 0 29 30" style="display:block"><path fill="#9c9c9c" d="M26 4v23H3z"/><path stroke="#d0d0d0" stroke-width="2" d="M5 10h10M10 5v10"/><path stroke="#1d1d1d" stroke-width="2" d="M16 21h6.500"/></svg></div>
<div class="abs" style="left:478px;top:1610px;width:2px;height:148px;background:#9c9c9c"></div>
<div class="abs" style="left:480px;top:1610px;width:147px;height:148px;background:#c7c7c7;border:3px solid #d6d6d6;border-top-width:2px"></div>
<div class="abs" style="left:495px;top:1610px;font-size:19.5px;line-height:22px;font-weight:bold;color:#8b8b8b;-webkit-text-stroke:.4px #8b8b8b">4</div>
<div class="abs" style="left:488px;top:1638px;width:130px;height:90px;background:#e0e0e0"></div>
<div class="abs" style="left:492px;top:1642px;width:122px;height:82px;background:#ecebed;border:2px solid #000;overflow:hidden">
<svg width="118" height="78" viewBox="2 2 118 78" style="display:block"><path d="M70 40L100 48L95 66L60 66Z" fill="#c9c8cc" filter="url(#tb)"/><clipPath id="tc3"><path d="M37 36C39 24 49 18 61 19C74 21 81 29 80 41L78 52C75 61 67 64 57 62C45 60 38 54 37 46Z"/></clipPath><g clip-path="url(#tc3)"><rect x="30" y="15" width="60" height="55" fill="url(#tg)"/><rect x="30" y="15" width="60" height="55" filter="url(#ts2)" opacity=".8"/><rect x="30" y="15" width="60" height="55" filter="url(#ts)" opacity=".8"/></g></svg>
</div>
<div class="abs" style="left:552px;top:1692px;width:31px;height:32px;background:#000;border:1px solid #000;box-shadow:inset 0 0 0 2px #8c8c8c"><svg width="29" height="30" viewBox="0 0 29 30" style="display:block"><path fill="#b8b8b8" d="M10 7c.7 5 2 6.300 7 7-5 .7-6.300 2-7 7-.7-5-2-6.300-7-7 5-.7 6.300-2 7-7zM19.500 5c.4 2.800 1.200 3.600 4 4-2.800.4-3.600 1.200-4 4-.4-2.800-1.200-3.600-4-4 2.800-.4 3.600-1.200 4-4zM19.500 16c.45 3.200 1.300 4.050 4.500 4.500-3.200.45-4.050 1.300-4.500 4.500-.45-3.200-1.300-4.050-4.500-4.500 3.200-.45 4.050-1.300 4.500-4.500z"/></svg></div>
<div class="abs" style="left:583px;top:1692px;width:31px;height:32px;background:#000;border:1px solid #000;box-shadow:inset 0 0 0 2px #8c8c8c"><svg width="29" height="30" viewBox="0 0 29 30" style="display:block"><path fill="#9c9c9c" d="M26 4v23H3z"/><path stroke="#d0d0d0" stroke-width="2" d="M5 10h10M10 5v10"/><path stroke="#1d1d1d" stroke-width="2" d="M16 21h6.500"/></svg></div>
<div class="abs" style="left:627px;top:1610px;width:2px;height:148px;background:#9c9c9c"></div>
<div class="abs" style="left:629px;top:1610px;width:146px;height:148px;background:#c7c7c7;border:3px solid #d6d6d6;border-top-width:2px"></div>
<div class="abs" style="left:644px;top:1610px;font-size:19.5px;line-height:22px;font-weight:bold;color:#8b8b8b;-webkit-text-stroke:.4px #8b8b8b">5</div>
<div class="abs" style="left:637px;top:1638px;width:130px;height:90px;background:#e0e0e0"></div>
<div class="abs" style="left:641px;top:1642px;width:122px;height:82px;background:#ecebed;border:2px solid #000;overflow:hidden">
<svg width="118" height="78" viewBox="2 2 118 78" style="display:block"><path d="M70 40L100 48L95 66L60 66Z" fill="#c9c8cc" filter="url(#tb)"/><clipPath id="tc4"><path d="M42 38C42 26 50 20 62 20C74 20 81 26 81 38L81 54C80 62 72 66 62 66C50 66 43 62 42 54Z"/></clipPath><g clip-path="url(#tc4)"><rect x="30" y="15" width="60" height="55" fill="url(#tg)"/><rect x="30" y="15" width="60" height="55" filter="url(#ts2)" opacity=".8"/><rect x="30" y="15" width="60" height="55" filter="url(#ts)" opacity=".8"/></g></svg>
</div>
<div class="abs" style="left:701px;top:1692px;width:31px;height:32px;background:#000;border:1px solid #000;box-shadow:inset 0 0 0 2px #8c8c8c"><svg width="29" height="30" viewBox="0 0 29 30" style="display:block"><path fill="#b8b8b8" d="M10 7c.7 5 2 6.300 7 7-5 .7-6.300 2-7 7-.7-5-2-6.300-7-7 5-.7 6.300-2 7-7zM19.500 5c.4 2.800 1.200 3.600 4 4-2.800.4-3.600 1.200-4 4-.4-2.800-1.200-3.600-4-4 2.800-.4 3.600-1.200 4-4zM19.500 16c.45 3.200 1.300 4.050 4.500 4.500-3.200.45-4.050 1.300-4.500 4.500-.45-3.200-1.300-4.050-4.500-4.500 3.200-.45 4.050-1.300 4.500-4.500z"/></svg></div>
<div class="abs" style="left:732px;top:1692px;width:31px;height:32px;background:#000;border:1px solid #000;box-shadow:inset 0 0 0 2px #8c8c8c"><svg width="29" height="30" viewBox="0 0 29 30" style="display:block"><path fill="#9c9c9c" d="M26 4v23H3z"/><path stroke="#d0d0d0" stroke-width="2" d="M5 10h10M10 5v10"/><path stroke="#1d1d1d" stroke-width="2" d="M16 21h6.500"/></svg></div>
<div class="abs" style="left:775px;top:1610px;width:2px;height:148px;background:#9c9c9c"></div>
<div class="abs" style="left:777px;top:1610px;width:146px;height:148px;background:#c7c7c7;border:3px solid #d6d6d6;border-top-width:2px"></div>
<div class="abs" style="left:792px;top:1610px;font-size:19.5px;line-height:22px;font-weight:bold;color:#8b8b8b;-webkit-text-stroke:.4px #8b8b8b">6</div>
<div class="abs" style="left:785px;top:1638px;width:130px;height:90px;background:#e0e0e0"></div>
<div class="abs" style="left:789px;top:1642px;width:122px;height:82px;background:#ecebed;border:2px solid #000;overflow:hidden">
<svg width="118" height="78" viewBox="2 2 118 78" style="display:block"><path d="M70 40L100 48L95 66L60 66Z" fill="#c9c8cc" filter="url(#tb)"/><clipPath id="tc5"><path d="M39 38C40 25 49 19 61 19C74 20 82 28 81 40L80 51C78 60 70 63 60 63C47 62 40 57 39 49Z"/></clipPath><g clip-path="url(#tc5)"><rect x="30" y="15" width="60" height="55" fill="url(#tg)"/><rect x="30" y="15" width="60" height="55" filter="url(#ts2)" opacity=".8"/><rect x="30" y="15" width="60" height="55" filter="url(#ts)" opacity=".8"/></g></svg>
</div>
<div class="abs" style="left:849px;top:1692px;width:31px;height:32px;background:#000;border:1px solid #000;box-shadow:inset 0 0 0 2px #8c8c8c"><svg width="29" height="30" viewBox="0 0 29 30" style="display:block"><path fill="#b8b8b8" d="M10 7c.7 5 2 6.300 7 7-5 .7-6.300 2-7 7-.7-5-2-6.300-7-7 5-.7 6.300-2 7-7zM19.500 5c.4 2.800 1.200 3.600 4 4-2.800.4-3.600 1.200-4 4-.4-2.800-1.200-3.600-4-4 2.800-.4 3.600-1.200 4-4zM19.500 16c.45 3.200 1.300 4.050 4.500 4.500-3.200.45-4.050 1.300-4.500 4.500-.45-3.200-1.300-4.050-4.500-4.500 3.200-.45 4.050-1.300 4.500-4.500z"/></svg></div>
<div class="abs" style="left:880px;top:1692px;width:31px;height:32px;background:#000;border:1px solid #000;box-shadow:inset 0 0 0 2px #8c8c8c"><svg width="29" height="30" viewBox="0 0 29 30" style="display:block"><path fill="#9c9c9c" d="M26 4v23H3z"/><path stroke="#d0d0d0" stroke-width="2" d="M5 10h10M10 5v10"/><path stroke="#1d1d1d" stroke-width="2" d="M16 21h6.500"/></svg></div>
<div class="abs" style="left:923px;top:1610px;width:2px;height:148px;background:#9c9c9c"></div>
<div class="abs" style="left:925px;top:1610px;width:146px;height:148px;background:#c7c7c7;border:3px solid #d6d6d6;border-top-width:2px"></div>
<div class="abs" style="left:940px;top:1610px;font-size:19.5px;line-height:22px;font-weight:bold;color:#8b8b8b;-webkit-text-stroke:.4px #8b8b8b">7</div>
<div class="abs" style="left:933px;top:1638px;width:130px;height:90px;background:#e0e0e0"></div>
<div class="abs" style="left:937px;top:1642px;width:122px;height:82px;background:#ecebed;border:2px solid #000;overflow:hidden">
<svg width="118" height="78" viewBox="2 2 118 78" style="display:block"><path d="M70 40L100 48L95 66L60 66Z" fill="#c9c8cc" filter="url(#tb)"/><clipPath id="tc6"><path d="M38 40C39 27 49 20 62 20C76 21 85 29 84 41L83 50C81 59 72 63 61 62C48 61 39 56 38 48Z"/></clipPath><g clip-path="url(#tc6)"><rect x="30" y="15" width="60" height="55" fill="url(#tg)"/><rect x="30" y="15" width="60" height="55" filter="url(#ts2)" opacity=".8"/><rect x="30" y="15" width="60" height="55" filter="url(#ts)" opacity=".8"/></g></svg>
</div>
<div class="abs" style="left:997px;top:1692px;width:31px;height:32px;background:#000;border:1px solid #000;box-shadow:inset 0 0 0 2px #8c8c8c"><svg width="29" height="30" viewBox="0 0 29 30" style="display:block"><path fill="#b8b8b8" d="M10 7c.7 5 2 6.300 7 7-5 .7-6.300 2-7 7-.7-5-2-6.300-7-7 5-.7 6.300-2 7-7zM19.500 5c.4 2.800 1.200 3.600 4 4-2.800.4-3.600 1.200-4 4-.4-2.800-1.200-3.600-4-4 2.800-.4 3.600-1.200 4-4zM19.500 16c.45 3.200 1.300 4.050 4.500 4.500-3.200.45-4.050 1.300-4.500 4.500-.45-3.200-1.300-4.050-4.500-4.500 3.200-.45 4.050-1.300 4.500-4.500z"/></svg></div>
<div class="abs" style="left:1028px;top:1692px;width:31px;height:32px;background:#000;border:1px solid #000;box-shadow:inset 0 0 0 2px #8c8c8c"><svg width="29" height="30" viewBox="0 0 29 30" style="display:block"><path fill="#9c9c9c" d="M26 4v23H3z"/><path stroke="#d0d0d0" stroke-width="2" d="M5 10h10M10 5v10"/><path stroke="#1d1d1d" stroke-width="2" d="M16 21h6.500"/></svg></div>
<div class="abs" style="left:1071px;top:1610px;width:2px;height:148px;background:#9c9c9c"></div>
<div class="abs" style="left:1073px;top:1610px;width:146px;height:148px;background:#c7c7c7;border:3px solid #d6d6d6;border-top-width:2px"></div>
<div class="abs" style="left:1088px;top:1610px;font-size:19.5px;line-height:22px;font-weight:bold;color:#8b8b8b;-webkit-text-stroke:.4px #8b8b8b">8</div>
<div class="abs" style="left:1081px;top:1638px;width:130px;height:90px;background:#e0e0e0"></div>
<div class="abs" style="left:1085px;top:1642px;width:122px;height:82px;background:#ecebed;border:2px solid #000;overflow:hidden">
<svg width="118" height="78" viewBox="2 2 118 78" style="display:block"><path d="M70 40L100 48L95 66L60 66Z" fill="#c9c8cc" filter="url(#tb)"/><clipPath id="tc7"><path d="M35 40C36 27 46 20 59 20C72 21 82 28 81 40L80 50C78 59 69 63 58 62C45 61 36 56 35 48Z"/></clipPath><g clip-path="url(#tc7)"><rect x="30" y="15" width="60" height="55" fill="url(#tg)"/><rect x="30" y="15" width="60" height="55" filter="url(#ts2)" opacity=".8"/><rect x="30" y="15" width="60" height="55" filter="url(#ts)" opacity=".8"/></g></svg>
</div>
<div class="abs" style="left:1145px;top:1692px;width:31px;height:32px;background:#000;border:1px solid #000;box-shadow:inset 0 0 0 2px #8c8c8c"><svg width="29" height="30" viewBox="0 0 29 30" style="display:block"><path fill="#b8b8b8" d="M10 7c.7 5 2 6.300 7 7-5 .7-6.300 2-7 7-.7-5-2-6.300-7-7 5-.7 6.300-2 7-7zM19.500 5c.4 2.800 1.200 3.600 4 4-2.800.4-3.600 1.200-4 4-.4-2.800-1.200-3.600-4-4 2.800-.4 3.600-1.200 4-4zM19.500 16c.45 3.200 1.300 4.050 4.500 4.500-3.200.45-4.050 1.300-4.500 4.500-.45-3.200-1.300-4.050-4.500-4.500 3.200-.45 4.050-1.300 4.500-4.500z"/></svg></div>
<div class="abs" style="left:1176px;top:1692px;width:31px;height:32px;background:#000;border:1px solid #000;box-shadow:inset 0 0 0 2px #8c8c8c"><svg width="29" height="30" viewBox="0 0 29 30" style="display:block"><path fill="#9c9c9c" d="M26 4v23H3z"/><path stroke="#d0d0d0" stroke-width="2" d="M5 10h10M10 5v10"/><path stroke="#1d1d1d" stroke-width="2" d="M16 21h6.500"/></svg></div>
<div class="abs" style="left:1219px;top:1610px;width:2px;height:148px;background:#9c9c9c"></div>
<div class="abs" style="left:1221px;top:1610px;width:146px;height:148px;background:#c7c7c7;border:3px solid #d6d6d6;border-top-width:2px"></div>
<div class="abs" style="left:1236px;top:1610px;font-size:19.5px;line-height:22px;font-weight:bold;color:#8b8b8b;-webkit-text-stroke:.4px #8b8b8b">9</div>
<div class="abs" style="left:1229px;top:1638px;width:130px;height:90px;background:#e0e0e0"></div>
<div class="abs" style="left:1233px;top:1642px;width:122px;height:82px;background:#ecebed;border:2px solid #000;overflow:hidden">
<svg width="118" height="78" viewBox="2 2 118 78" style="display:block"><path d="M70 40L100 48L95 66L60 66Z" fill="#c9c8cc" filter="url(#tb)"/><clipPath id="tc8"><path d="M40 36C40 25 48 20 59 20C70 20 78 25 78 36L78 55C77 62 69 66 59 66C48 66 41 62 40 55Z"/></clipPath><g clip-path="url(#tc8)"><rect x="30" y="15" width="60" height="55" fill="url(#tg)"/><rect x="30" y="15" width="60" height="55" filter="url(#ts2)" opacity=".8"/><rect x="30" y="15" width="60" height="55" filter="url(#ts)" opacity=".8"/></g></svg>
</div>
<div class="abs" style="left:1293px;top:1692px;width:31px;height:32px;background:#000;border:1px solid #000;box-shadow:inset 0 0 0 2px #8c8c8c"><svg width="29" height="30" viewBox="0 0 29 30" style="display:block"><path fill="#b8b8b8" d="M10 7c.7 5 2 6.300 7 7-5 .7-6.300 2-7 7-.7-5-2-6.300-7-7 5-.7 6.300-2 7-7zM19.500 5c.4 2.800 1.200 3.600 4 4-2.800.4-3.600 1.200-4 4-.4-2.800-1.200-3.600-4-4 2.800-.4 3.600-1.200 4-4zM19.500 16c.45 3.200 1.300 4.050 4.500 4.500-3.200.45-4.050 1.300-4.500 4.500-.45-3.200-1.300-4.050-4.500-4.500 3.200-.45 4.050-1.300 4.500-4.500z"/></svg></div>
<div class="abs" style="left:1324px;top:1692px;width:31px;height:32px;background:#000;border:1px solid #000;box-shadow:inset 0 0 0 2px #8c8c8c"><svg width="29" height="30" viewBox="0 0 29 30" style="display:block"><path fill="#9c9c9c" d="M26 4v23H3z"/><path stroke="#d0d0d0" stroke-width="2" d="M5 10h10M10 5v10"/><path stroke="#1d1d1d" stroke-width="2" d="M16 21h6.500"/></svg></div>
<div class="abs" style="left:1367px;top:1610px;width:2px;height:148px;background:#9c9c9c"></div>
<div class="abs" style="left:1369px;top:1610px;width:147px;height:148px;background:#c7c7c7;border:3px solid #d6d6d6;border-top-width:2px"></div>
<div class="abs" style="left:1381px;top:1610px;font-size:19.5px;line-height:22px;font-weight:bold;color:#8b8b8b;-webkit-text-stroke:.4px #8b8b8b">10</div>
<div class="abs" style="left:1377px;top:1638px;width:130px;height:90px;background:#e0e0e0"></div>
<div class="abs" style="left:1381px;top:1642px;width:122px;height:82px;background:#ecebed;border:2px solid #000;overflow:hidden">
<svg width="118" height="78" viewBox="2 2 118 78" style="display:block"><path d="M70 40L100 48L95 66L60 66Z" fill="#c9c8cc" filter="url(#tb)"/><clipPath id="tc9"><path d="M36 40C37 27 47 20 60 20C73 21 83 28 82 40L81 50C79 59 70 63 59 62C46 61 37 56 36 48Z"/></clipPath><g clip-path="url(#tc9)"><rect x="30" y="15" width="60" height="55" fill="url(#tg)"/><rect x="30" y="15" width="60" height="55" filter="url(#ts2)" opacity=".8"/><rect x="30" y="15" width="60" height="55" filter="url(#ts)" opacity=".8"/></g></svg>
</div>
<div class="abs" style="left:1441px;top:1692px;width:31px;height:32px;background:#000;border:1px solid #000;box-shadow:inset 0 0 0 2px #8c8c8c"><svg width="29" height="30" viewBox="0 0 29 30" style="display:block"><path fill="#b8b8b8" d="M10 7c.7 5 2 6.300 7 7-5 .7-6.300 2-7 7-.7-5-2-6.300-7-7 5-.7 6.300-2 7-7zM19.500 5c.4 2.800 1.200 3.600 4 4-2.800.4-3.600 1.200-4 4-.4-2.800-1.200-3.600-4-4 2.800-.4 3.600-1.200 4-4zM19.500 16c.45 3.200 1.300 4.050 4.500 4.500-3.200.45-4.050 1.300-4.500 4.500-.45-3.200-1.300-4.050-4.500-4.500 3.200-.45 4.050-1.300 4.500-4.500z"/></svg></div>
<div class="abs" style="left:1472px;top:1692px;width:31px;height:32px;background:#000;border:1px solid #000;box-shadow:inset 0 0 0 2px #8c8c8c"><svg width="29" height="30" viewBox="0 0 29 30" style="display:block"><path fill="#9c9c9c" d="M26 4v23H3z"/><path stroke="#d0d0d0" stroke-width="2" d="M5 10h10M10 5v10"/><path stroke="#1d1d1d" stroke-width="2" d="M16 21h6.500"/></svg></div>
<div class="abs" style="left:41px;top:1761px;width:1500px;height:18px;background:linear-gradient(#8c8c8c,#a6a6a6 25%,#a4a4a4 70%,#7e7e7e);border-radius:3px 0 0 3px"></div>
<div class="abs" style="left:1496px;top:1790px;width:0;height:0;border-left:14px solid transparent;border-top:14px solid #555"></div>
</div>
</div>

<div id="menu">
<svg class="abs" style="left:0;top:0" width="684" height="1340" viewBox="342 76 684 1340">
<defs><filter id="mbgf" filterUnits="userSpaceOnUse" x="180" y="-80" width="1040" height="1660"><feGaussianBlur stdDeviation="37"/></filter></defs>
<rect x="342" y="76" width="684" height="1340" fill="#b3b1b6"/>
<g filter="url(#mbgf)">
<rect x="180" y="-80" width="1040" height="1660" fill="#a9a7ac"/>
<rect x="180" y="-80" width="1040" height="156" fill="#c9c6ce"/>
<rect x="180" y="76" width="1040" height="55" fill="#e8e6eb"/>
<rect x="180" y="252" width="433" height="731" fill="#b2b0b5"/>
<rect x="88" y="408" width="494" height="332" fill="#dad8dd"/>
<rect x="258" y="486" width="200" height="196" rx="40" fill="#c4c2c7"/>
<rect x="68" y="860" width="534" height="112" fill="#b4b2b7"/>
<rect x="180" y="983" width="433" height="620" fill="#b2b0b5"/>
<rect x="68" y="983" width="534" height="620" fill="#b6b4b9"/>
<rect x="638" y="252" width="620" height="32" fill="#d0ced3"/>
<rect x="638" y="284" width="620" height="1320" fill="#edebf0"/>
</g></svg>
<div class="mi" style="top:11px"><span class="mt" style="letter-spacing:0.54px">New Catalog...</span>
</div>
<div class="mi" style="top:55px"><span class="mt" style="letter-spacing:0.46px">Open Catalog...</span>
<span class="sg sC" style="left:607px">⌘</span>
<span class="sg sS" style="left:572.5px">⇧</span>
<span class="sk" style="left:636px">O</span>
</div>
<div class="msep" style="top:109px"></div>
<div class="mi" style="top:121px"><span class="mt" style="letter-spacing:0.43px">Open Recent</span>
<svg class="chev" width="14" height="22" viewBox="0 0 14 22"><path d="M2.500 2.500 11 11 2.500 19.500" fill="none" stroke="#242426" stroke-width="3" stroke-linecap="round" stroke-linejoin="round"/></svg>
</div>
<div class="msep" style="top:175px"></div>
<div class="mi" style="top:187px"><span class="mt" style="letter-spacing:0.58px">Optimize Catalog...</span>
</div>
<div class="mi" style="top:231px"><span class="mt" style="letter-spacing:0.23px">Rename Catalog...</span>
</div>
<div class="msep" style="top:285px"></div>
<div class="mi" style="top:297px"><span class="mt" style="letter-spacing:0.6px">Import Photos and Video...</span>
<span class="sg sC" style="left:607px">⌘</span>
<span class="sg sS" style="left:572.5px">⇧</span>
<span class="sk" style="left:636px">I</span>
</div>
<div class="mi" style="top:341px"><span class="mt" style="letter-spacing:0.73px">Import from Another Catalog...</span>
</div>
<div class="mi" style="top:385px"><span class="mt" style="letter-spacing:0.53px">Import a Photoshop Elements Catalog...</span>
</div>
<div class="mi" style="top:429px"><span class="mt" style="letter-spacing:0.71px">Tethered Capture</span>
<svg class="chev" width="14" height="22" viewBox="0 0 14 22"><path d="M2.500 2.500 11 11 2.500 19.500" fill="none" stroke="#242426" stroke-width="3" stroke-linecap="round" stroke-linejoin="round"/></svg>
</div>
<div class="mi" style="top:473px"><span class="mt" style="letter-spacing:0.81px">Auto Import</span>
<svg class="chev" width="14" height="22" viewBox="0 0 14 22"><path d="M2.500 2.500 11 11 2.500 19.500" fill="none" stroke="#242426" stroke-width="3" stroke-linecap="round" stroke-linejoin="round"/></svg>
</div>
<div class="msep" style="top:527px"></div>
<div class="mi" style="top:539px"><span class="mt" style="letter-spacing:0.5px">Import Develop Profiles and Presets...</span>
</div>
<div class="msep" style="top:593px"></div>
<div class="mi" style="top:605px"><span class="mt" style="letter-spacing:0.58px">Export...</span>
<span class="sg sC" style="left:607px">⌘</span>
<span class="sg sS" style="left:572.5px">⇧</span>
<span class="sk" style="left:636px">E</span>
</div>
<div class="mi" style="top:649px"><span class="mt" style="letter-spacing:0.61px">Export with Previous</span>
<span class="sg sC" style="left:607px">⌘</span>
<span class="sg sS" style="left:572.5px">⇧</span>
<span class="sg sO" style="left:553px">⌥</span>
<span class="sk" style="left:636px">E</span>
</div>
<div class="mi" style="top:693px"><span class="mt" style="letter-spacing:0.68px">Export with Preset</span>
<svg class="chev" width="14" height="22" viewBox="0 0 14 22"><path d="M2.500 2.500 11 11 2.500 19.500" fill="none" stroke="#242426" stroke-width="3" stroke-linecap="round" stroke-linejoin="round"/></svg>
</div>
<div class="mi" style="top:737px"><span class="mt" style="letter-spacing:0.48px">Export as Catalog...</span>
</div>
<div class="msep" style="top:791px"></div>
<div class="mi" style="top:803px"><span class="mt" style="letter-spacing:0.26px">Email Photos...</span>
<span class="sg sC" style="left:607px">⌘</span>
<span class="sg sS" style="left:572.5px">⇧</span>
<span class="sk" style="left:636px">M</span>
</div>
<div class="msep" style="top:857px"></div>
<div class="mi" style="top:869px"><span class="mt" style="letter-spacing:0.62px">Plug-in Manager...</span>
<span class="sg sC" style="left:607px">⌘</span>
<span class="sg sS" style="left:572.5px">⇧</span>
<span class="sg sO" style="left:553px">⌥</span>
<span class="sk" style="left:636px">,</span>
</div>
<div class="mi" style="top:913px"><span class="mt" style="letter-spacing:0.59px">Plug-in Extras</span>
<svg class="chev" width="14" height="22" viewBox="0 0 14 22"><path d="M2.500 2.500 11 11 2.500 19.500" fill="none" stroke="#242426" stroke-width="3" stroke-linecap="round" stroke-linejoin="round"/></svg>
</div>
<div class="msep" style="top:967px"></div>
<div class="mi" style="top:979px"><span class="mt" style="letter-spacing:0.62px">Show Quick Collection</span>
<span class="sg sC" style="left:607px">⌘</span>
<span class="sk" style="left:636px">B</span>
</div>
<div class="mi" style="top:1023px"><span class="mt" style="letter-spacing:0.46px">Save Quick Collection...</span>
<span class="sg sC" style="left:607px">⌘</span>
<span class="sg sO" style="left:579px">⌥</span>
<span class="sk" style="left:636px">B</span>
</div>
<div class="mi" style="top:1067px"><span class="mt" style="letter-spacing:0.58px">Clear Quick Collection</span>
<span class="sg sC" style="left:607px">⌘</span>
<span class="sg sS" style="left:572.5px">⇧</span>
<span class="sk" style="left:636px">B</span>
</div>
<div class="mi dis" style="top:1111px"><span class="mt" style="letter-spacing:0.61px">Set Quick Collection as Target</span>
<span class="sg sC" style="left:607px">⌘</span>
<span class="sg sS" style="left:572.5px">⇧</span>
<span class="sg sO" style="left:553px">⌥</span>
<span class="sk" style="left:636px">B</span>
</div>
<div class="msep" style="top:1165px"></div>
<div class="mi" style="top:1177px"><span class="mt" style="letter-spacing:0.57px">Library Filters</span>
<svg class="chev" width="14" height="22" viewBox="0 0 14 22"><path d="M2.500 2.500 11 11 2.500 19.500" fill="none" stroke="#242426" stroke-width="3" stroke-linecap="round" stroke-linejoin="round"/></svg>
</div>
<div class="msep" style="top:1231px"></div>
<div class="mi" style="top:1243px"><span class="mt" style="letter-spacing:0.33px">Page Setup...</span>
<span class="sg sC" style="left:607px">⌘</span>
<span class="sg sS" style="left:572.5px">⇧</span>
<span class="sk" style="left:636px">P</span>
</div>
<div class="mi" style="top:1287px"><span class="mt" style="letter-spacing:0.52px">Printer...</span>
<span class="sg sC" style="left:607px">⌘</span>
<span class="sk" style="left:636px">P</span>
</div>
<div id="ring"></div>
</div>
</body>
</html>
